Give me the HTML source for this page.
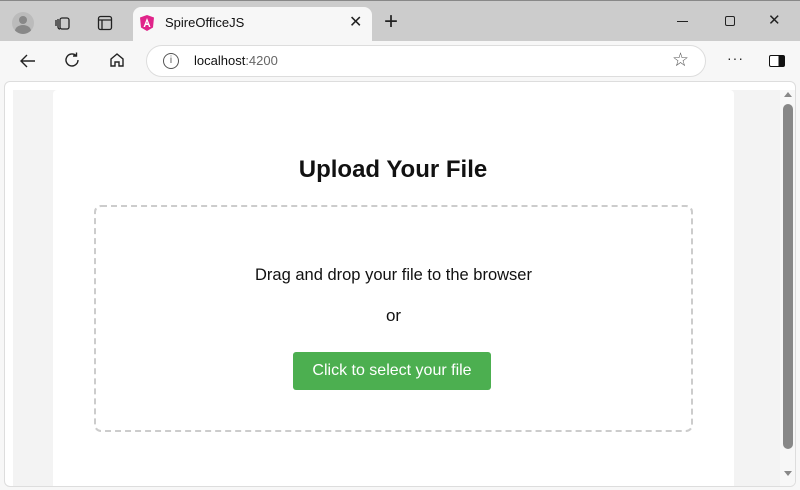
<!DOCTYPE html>
<html><head><style>
*{margin:0;padding:0;box-sizing:border-box}
body{width:800px;height:490px;overflow:hidden;background:#ccc;font-family:"Liberation Sans",sans-serif;position:relative}
.abs{position:absolute}
</style></head><body>
<div class="abs" style="left:0;top:0;width:800px;height:1px;background:#888"></div>
<div class="abs" style="left:12px;top:12px;width:22px;height:22px;border-radius:50%;background:#bbb;overflow:hidden"><div class="abs" style="left:7px;top:4px;width:8px;height:8px;border-radius:50%;background:#888"></div><div class="abs" style="left:3px;top:13px;width:16px;height:12px;border-radius:50%;background:#888"></div></div>
<svg class="abs" style="left:54px;top:14px" width="18" height="18" viewBox="0 0 18 18" fill="none" stroke="#222" stroke-width="1.3"><rect x="6" y="4" width="9" height="11" rx="2"/><path d="M4 5v8a2 2 0 0 0 2 2M2 6v6"/></svg>
<svg class="abs" style="left:97px;top:15px" width="16" height="16" viewBox="0 0 16 16" fill="none" stroke="#222" stroke-width="1.3"><rect x="1.5" y="1.5" width="13" height="13" rx="2"/><path d="M1.5 5h13M5 5v9.5"/></svg>
<div class="abs" style="left:133px;top:7px;width:239px;height:34px;background:#f7f7f7;border-radius:8px 8px 0 0"></div>
<svg class="abs" style="left:139px;top:14px" width="16" height="18" viewBox="0 0 16 18"><path d="M8 1L1 3.5l1 10L8 17l6-3.5 1-10z" fill="#e0248a"/><path d="M8 4L4.5 13h1.5l.8-2h2.4l.8 2h1.5zM7.3 9.5L8 7.5l.7 2z" fill="#fff"/></svg>
<div class="abs" style="left:165px;top:15px;font-size:13px;color:#111">SpireOfficeJS</div>
<div class="abs" style="left:349px;top:12px;font-size:16px;color:#222">✕</div>
<div class="abs" style="left:384px;top:8px;font-size:24px;color:#222;font-weight:300">+</div>
<div class="abs" style="left:677px;top:21px;width:11px;height:1px;background:#222"></div>
<div class="abs" style="left:725px;top:16px;width:10px;height:10px;border:1px solid #222;border-radius:2px"></div>
<div class="abs" style="left:768px;top:11px;font-size:15px;color:#222">✕</div>
<div class="abs" style="left:0;top:41px;width:800px;height:449px;background:#f7f7f7"></div>
<svg class="abs" style="left:19px;top:52px" width="18" height="18" viewBox="0 0 18 18" fill="none" stroke="#222" stroke-width="1.4"><path d="M16 9H3M8 3L2 9l6 6"/></svg>
<svg class="abs" style="left:63px;top:51px" width="18" height="18" viewBox="0 0 18 18" fill="none" stroke="#222" stroke-width="1.4"><path d="M15 9a6 6 0 1 1-2-4.5M13.5 1.5v3.5H10"/></svg>
<svg class="abs" style="left:108px;top:51px" width="18" height="18" viewBox="0 0 18 18" fill="none" stroke="#222" stroke-width="1.4"><path d="M3 8l6-5 6 5v7h-4v-4H7v4H3z"/></svg>
<div class="abs" style="left:146px;top:45px;width:560px;height:32px;background:#fff;border:1px solid #ddd;border-radius:16px"></div>
<div class="abs" style="left:163px;top:53px;width:16px;height:16px;border:1.3px solid #555;border-radius:50%;font-size:10px;text-align:center;line-height:14px;color:#555">i</div>
<div class="abs" style="left:194px;top:53px;font-size:13px;color:#111">localhost<span style="color:#666">:4200</span></div>
<div class="abs" style="left:672px;top:49px;font-size:19px;color:#555">☆</div>
<div class="abs" style="left:727px;top:50px;font-size:14px;color:#222;letter-spacing:1px">···</div>
<div class="abs" style="left:769px;top:55px;width:16px;height:12px;border:1.5px solid #111;border-radius:2px;background:linear-gradient(90deg,#fff 60%,#111 60%)"></div>
<div class="abs" style="left:4px;top:81px;width:792px;height:406px;background:#fff;border:1px solid #ddd;border-radius:6px;overflow:hidden">
<div class="abs" style="left:8px;top:8px;width:767px;height:400px;background:#f3f3f3"></div>
<div class="abs" style="left:48px;top:8px;width:681px;height:400px;background:#fff;border-radius:4px"></div>
<div class="abs" style="left:775px;top:8px;width:16px;height:400px;background:#f7f7f7"></div>
<div class="abs" style="left:778px;top:22px;width:10px;height:345px;background:#888;border-radius:5px"></div>
<div class="abs" style="left:779px;top:10px;width:0;height:0;border-left:4px solid transparent;border-right:4px solid transparent;border-bottom:5px solid #888"></div>
<div class="abs" style="left:779px;top:389px;width:0;height:0;border-left:4px solid transparent;border-right:4px solid transparent;border-top:5px solid #888"></div>
</div>
<div class="abs" style="left:53px;top:156px;width:680px;text-align:center;font-size:24px;font-weight:bold;color:#111">Upload Your File</div>
<div class="abs" style="left:94px;top:205px;width:599px;height:227px;border:2px dashed #ccc;border-radius:7px"></div>
<div class="abs" style="left:94px;top:266px;width:599px;text-align:center;font-size:16.5px;color:#111">Drag and drop your file to the browser</div>
<div class="abs" style="left:94px;top:306px;width:599px;text-align:center;font-size:17px;color:#111">or</div>
<div class="abs" style="left:293px;top:352px;width:198px;height:38px;background:#4caf50;border-radius:3px;color:#fff;font-size:16px;text-align:center;line-height:38px">Click to select your file</div>
</body></html>
